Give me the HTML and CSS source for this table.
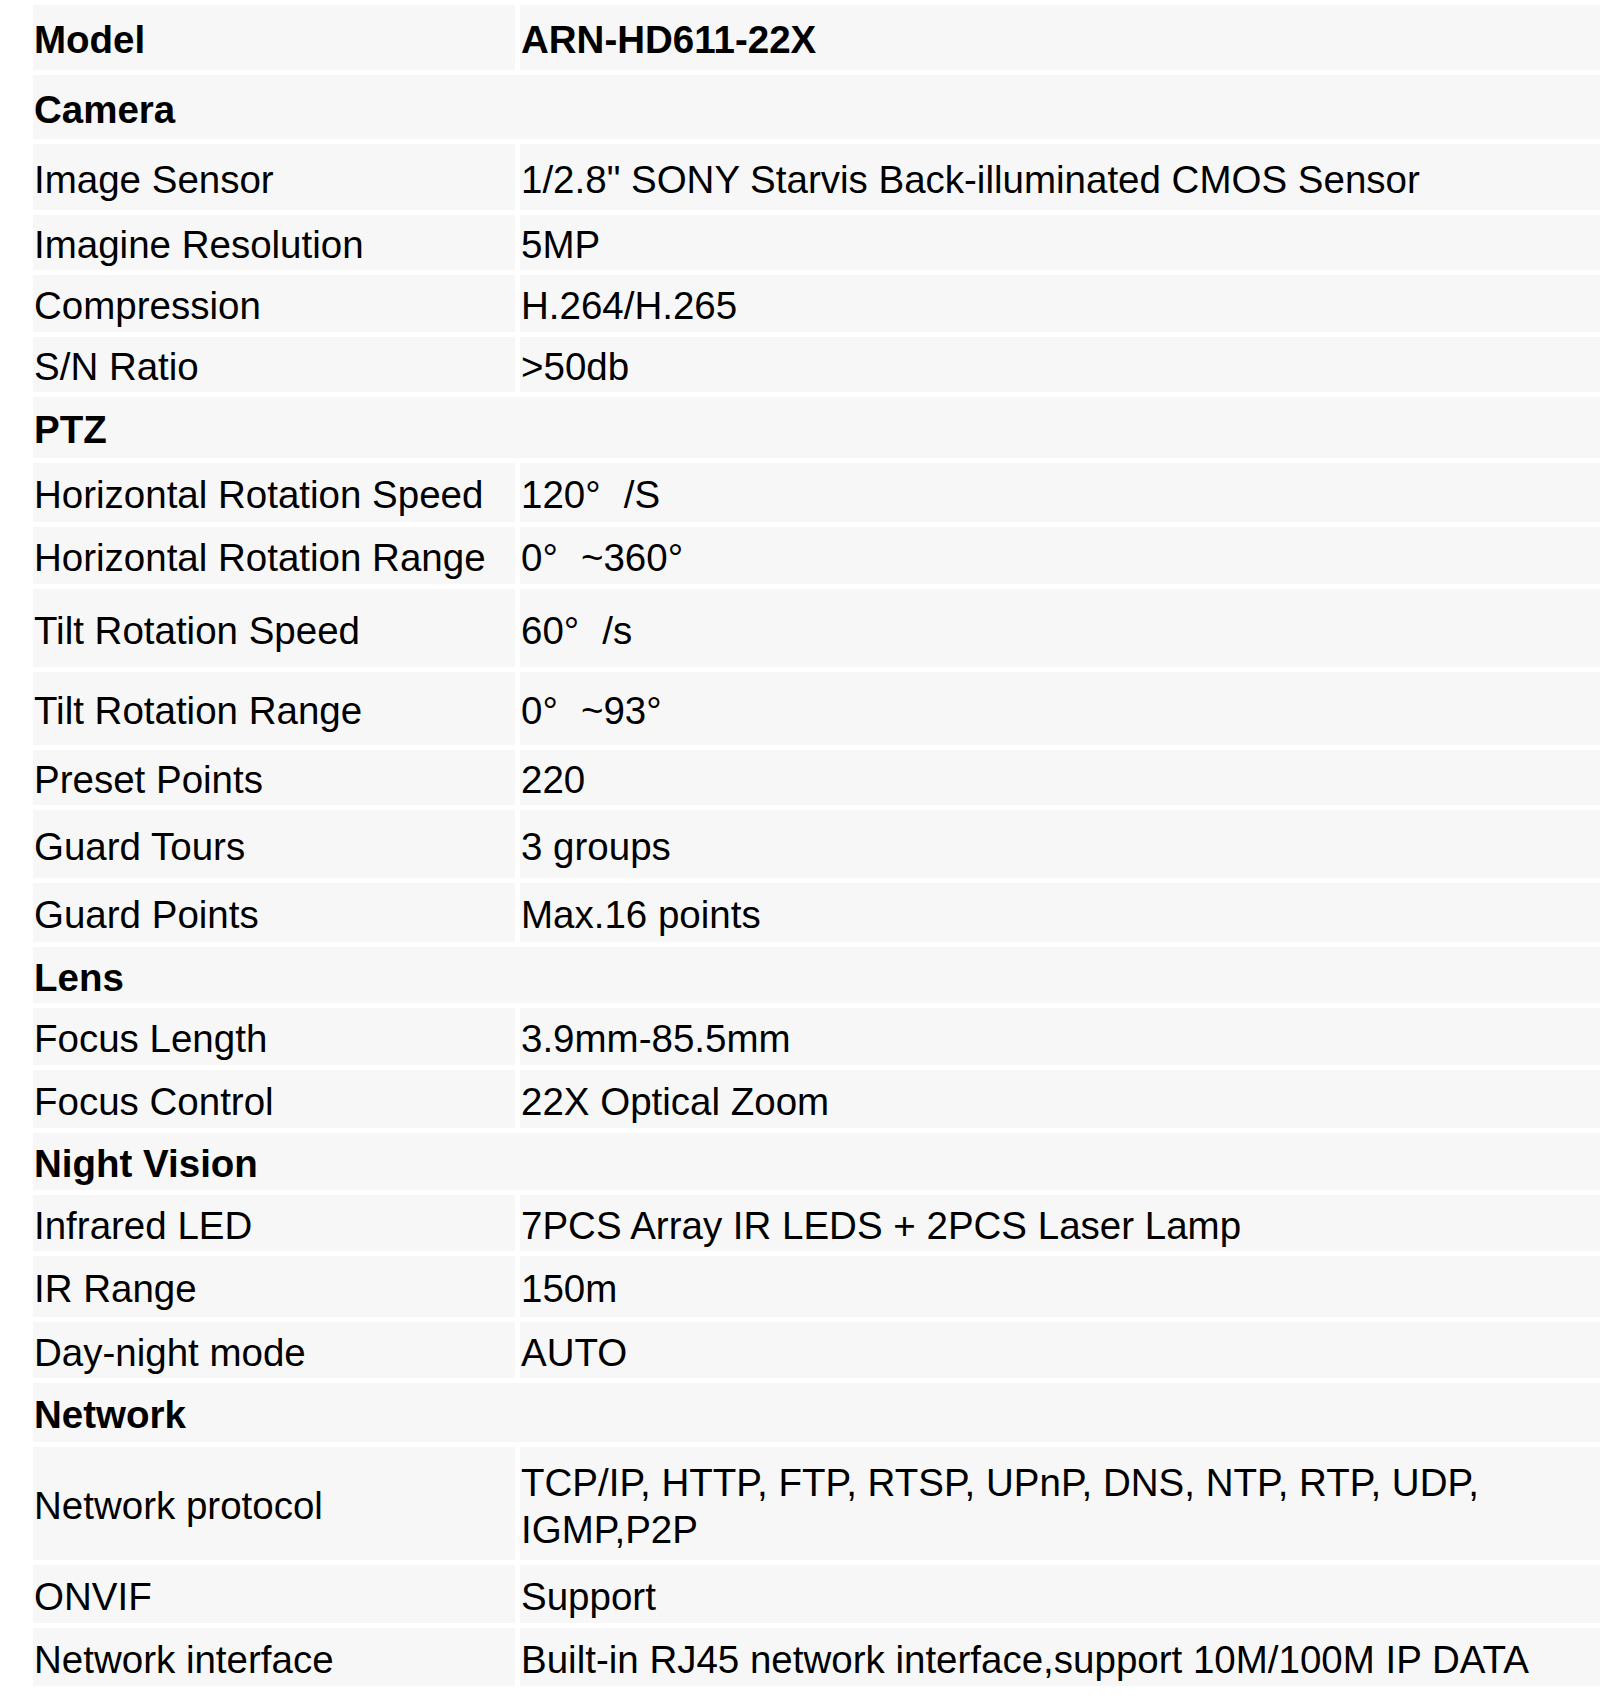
FILE: index.html
```html
<!DOCTYPE html>
<html>
	<head>
		<meta charset="utf-8">
		<title>ARN-HD611-22X</title>
		<link rel="stylesheet" href="styles.css">
	</head>
	<body>
		<table class="spec">
			<tr class="h65"><td class="name b">Model</td><td class="b">ARN-HD611-22X</td></tr>
			<tr class="h64"><td class="b" colspan="2">Camera</td></tr>
			<tr class="h66"><td class="name">Image Sensor</td><td>1/2.8" SONY Starvis Back-illuminated CMOS Sensor</td></tr>
			<tr class="h55"><td class="name">Imagine Resolution</td><td>5MP</td></tr>
			<tr class="h57"><td class="name">Compression</td><td>H.264/H.265</td></tr>
			<tr class="h55"><td class="name">S/N Ratio</td><td>&gt;50db</td></tr>
			<tr class="h61"><td class="b" colspan="2">PTZ</td></tr>
			<tr class="h59"><td class="name">Horizontal Rotation Speed</td><td>120<span class="deg">°</span>/S</td></tr>
			<tr class="h57"><td class="name">Horizontal Rotation Range</td><td>0<span class="deg">°</span>~360°</td></tr>
			<tr class="h78"><td class="name">Tilt Rotation Speed</td><td>60<span class="deg">°</span>/s</td></tr>
			<tr class="h73"><td class="name">Tilt Rotation Range</td><td>0<span class="deg">°</span>~93°</td></tr>
			<tr class="h55"><td class="name">Preset Points</td><td>220</td></tr>
			<tr class="h68"><td class="name">Guard Tours</td><td>3 groups</td></tr>
			<tr class="h59"><td class="name">Guard Points</td><td>Max.16 points</td></tr>
			<tr class="h56"><td class="b" colspan="2">Lens</td></tr>
			<tr class="h57"><td class="name">Focus Length</td><td>3.9mm-85.5mm</td></tr>
			<tr class="h58"><td class="name">Focus Control</td><td>22X Optical Zoom</td></tr>
			<tr class="h57"><td class="b" colspan="2">Night Vision</td></tr>
			<tr class="h56"><td class="name">Infrared LED</td><td>7PCS Array IR LEDS + 2PCS Laser Lamp</td></tr>
			<tr class="h61"><td class="name">IR Range</td><td>150m</td></tr>
			<tr class="h56"><td class="name">Day-night mode</td><td>AUTO</td></tr>
			<tr class="h59"><td class="b" colspan="2">Network</td></tr>
			<tr class="h113"><td class="name">Network protocol</td><td>TCP/IP, HTTP, FTP, RTSP, UPnP, DNS, NTP, RTP, UDP, IGMP,P2P</td></tr>
			<tr class="h58"><td class="name">ONVIF</td><td>Support</td></tr>
			<tr class="h58"><td class="name">Network interface</td><td>Built-in RJ45 network interface,support 10M/100M IP DATA</td></tr>
		</table>
	</body>
</html>
```

FILE: styles.css
```css
*{
	margin: 0;
	padding: 0;
}
html,body{
	background: #fff;
	overflow: hidden;
}
.spec{
	margin-left: 28px;
	width: 1577px;
	border-collapse: separate;
	border-spacing: 5px;
	font-family: "Liberation Sans", Arial, sans-serif;
	font-size: 38.5px;
	line-height: 1.2;
	color: #000;
}
.spec td{
	background: #f7f7f7;
	padding: 6px 1px 0;
	vertical-align: middle;
}
.spec td.name{
	width: 480px;
}
.spec .b{
	font-weight: bold;
}
.deg{
	display: inline-block;
	width: 1em;
}
.h55{height: 55px;}
.h56{height: 56px;}
.h57{height: 57px;}
.h58{height: 58px;}
.h59{height: 59px;}
.h61{height: 61px;}
.h64{height: 64px;}
.h65{height: 65px;}
.h66{height: 66px;}
.h68{height: 68px;}
.h73{height: 73px;}
.h78{height: 78px;}
.h113{height: 113px;}
```
